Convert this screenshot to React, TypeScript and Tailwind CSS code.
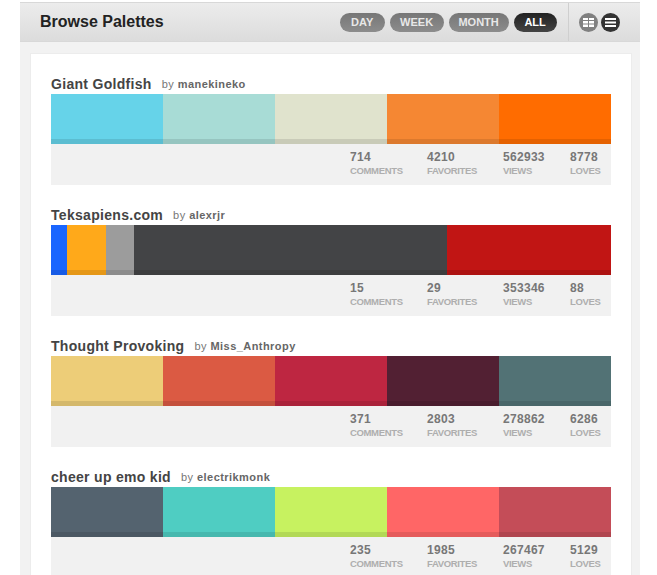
const palettes = [
  {
    name: 'Giant Goldfish',
    author: 'manekineko',
    colors: [
      { hex: '#66d3e9', w: 112 },
      { hex: '#a8dcd6', w: 112 },
      { hex: '#e0e3cd', w: 112 },
      { hex: '#f58733', w: 112 },
      { hex: '#ff6c00', w: 112 },
    ],
    stats: ['714', '4210', '562933', '8778'],
  },
  {
    name: 'Teksapiens.com',
    author: 'alexrjr',
    colors: [
      { hex: '#1a66ff', w: 16 },
      { hex: '#ffa91a', w: 39 },
      { hex: '#9c9c9c', w: 28 },
      { hex: '#434446', w: 313 },
      { hex: '#c11514', w: 164 },
    ],
    stats: ['15', '29', '353346', '88'],
  },
  {
    name: 'Thought Provoking',
    author: 'Miss_Anthropy',
    colors: [
      { hex: '#edcd78', w: 112 },
      { hex: '#db5a43', w: 112 },
      { hex: '#be2641', w: 112 },
      { hex: '#522033', w: 112 },
      { hex: '#527275', w: 112 },
    ],
    stats: ['371', '2803', '278862', '6286'],
  },
  {
    name: 'cheer up emo kid',
    author: 'electrikmonk',
    colors: [
      { hex: '#54636f', w: 112 },
      { hex: '#4fcdc2', w: 112 },
      { hex: '#c7f260', w: 112 },
      { hex: '#ff6666', w: 112 },
      { hex: '#c44d58', w: 112 },
    ],
    stats: ['235', '1985', '267467', '5129'],
  },
];

const statLabels = ['COMMENTS', 'FAVORITES', 'VIEWS', 'LOVES'];
const statWidths = ['w-[77px]', 'w-[76px]', 'w-[67px]', 'w-[41px]'];

const ranges = [
  { label: 'DAY', width: 'w-[45px]' },
  { label: 'WEEK', width: 'w-[54px]' },
  { label: 'MONTH', width: 'w-[60px]' },
  { label: 'ALL', width: 'w-[43px]', active: true },
];

function Palette({ palette }: { palette: (typeof palettes)[number] }) {
  return (
    <div className="mb-[19px] w-[560px]">
      <div className="flex h-[21px] items-center gap-[10px] pt-[2px]">
        <h2 className="text-[14px] font-bold tracking-[0.3px] text-[#444]">{palette.name}</h2>
        <p className="text-[11px] tracking-[0.45px] text-[#777]">
          by <span className="font-bold text-[#666]">{palette.author}</span>
        </p>
      </div>
      <div className="flex h-[50px]">
        {palette.colors.map((color, i) => (
          <div
            key={i}
            className="flex flex-col justify-end"
            style={{ width: color.w, backgroundColor: color.hex }}
          >
            <div className="h-[5px] bg-black/10" />
          </div>
        ))}
      </div>
      <div className="flex h-[41px] bg-[#f1f1f1] pl-[299px] pt-[6px]">
        {palette.stats.map((value, i) => (
          <div key={i} className={statWidths[i]}>
            <div className="text-[12px] leading-[15px] font-bold tracking-[0.3px] text-[#777]">{value}</div>
            <div className="text-[9.5px] leading-[12px] font-bold tracking-[-0.35px] text-[#aeaeae]">
              {statLabels[i]}
            </div>
          </div>
        ))}
      </div>
    </div>
  );
}

export default function App() {
  return (
    <div className="h-[575px] overflow-hidden bg-white pl-5 pt-[2px] font-['Liberation_Sans',Arial,sans-serif]">
      <div className="h-[600px] w-[620px] bg-[#f2f2f2]">
        {/* Header bar */}
        <header className="flex h-10 items-center border-y border-[#d8d8d8] bg-gradient-to-b from-[#ececec] to-[#dcdcdc] pl-5">
          <h1 className="text-[16px] font-bold text-[#222]">Browse Palettes</h1>
          <div className="ml-[176px] flex gap-[5px]">
            {ranges.map((range) => (
              <button
                key={range.label}
                className={`h-[19px] rounded-full text-[11px] font-bold ${range.width} ${
                  range.active
                    ? 'bg-gradient-to-b from-[#222] to-[#444] text-white'
                    : 'bg-gradient-to-b from-[#777] to-[#8c8c8c] text-[#e8e8e8]'
                }`}
              >
                {range.label}
              </button>
            ))}
          </div>
          <div className="ml-[11px] h-full border-l border-[#cfcfcf] pl-[10px]">
            <div className="flex h-full items-center gap-[3px]">
              <div className="flex h-[19px] w-[19px] items-center justify-center rounded-full bg-[#808080]">
                <svg width="11" height="9" viewBox="0 0 11 9" fill="#fff">
                  <rect x="0" y="0" width="5" height="2" />
                  <rect x="6" y="0" width="5" height="2" />
                  <rect x="0" y="3" width="5" height="2.5" />
                  <rect x="6" y="3" width="5" height="2.5" />
                  <rect x="0" y="6.5" width="5" height="2.5" />
                  <rect x="6" y="6.5" width="5" height="2.5" />
                </svg>
              </div>
              <div className="flex h-[19px] w-[19px] items-center justify-center rounded-full bg-[#333]">
                <svg width="11" height="9" viewBox="0 0 11 9" fill="#fff">
                  <rect x="0" y="0" width="11" height="2" />
                  <rect x="0" y="3.5" width="11" height="2" />
                  <rect x="0" y="7" width="11" height="2" />
                </svg>
              </div>
            </div>
          </div>
        </header>

        {/* Palette list */}
        <div className="pl-[10px] pt-[11px]">
          <main className="h-[540px] w-[602px] border border-[#ececec] bg-white pl-5 pt-[19px]">
            {palettes.map((palette) => (
              <Palette key={palette.name} palette={palette} />
            ))}
          </main>
        </div>
      </div>
    </div>
  );
}
